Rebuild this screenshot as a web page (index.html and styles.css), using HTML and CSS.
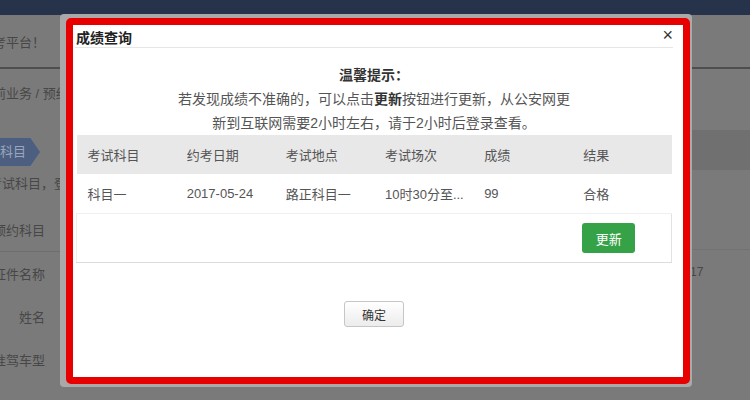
FILE: index.html
```html
<!DOCTYPE html>
<html lang="zh-CN">
<head>
    <meta charset="UTF-8">
    <title>成绩查询</title>
    <link rel="stylesheet" href="styles.css">
</head>
<body>

    <div class="topbar"></div>

    <div class="page">
        <div class="side side-left">
            <div class="row r-welcome">欢迎使用驾考平台！</div>
            <div class="row r-crumb">当前业务 / 预约</div>
            <div class="row r-tab"><span class="tab">科目</span></div>
            <div class="row r-note">请选择考试科目，登录后</div>
            <div class="row r-label r-first">预约科目</div>
            <div class="row r-label">证件名称</div>
            <div class="row r-label">姓名</div>
            <div class="row r-label">准驾车型</div>
        </div>
        <div class="side side-right">
            <div class="row r-welcome"></div>
            <div class="row r-band"></div>
            <div class="row r-gap"></div>
            <div class="row r-num">17</div>
        </div>
    </div>

    <!-- dialog over the dimmed page -->
    <div class="dialog-frame">
        <div class="dialog">
            <div class="dialog-title">
                <span>成绩查询</span>
                <span class="close">×</span>
            </div>

            <div class="dialog-body">
                <div class="tips">
                    <div class="tips-head">温馨提示：</div>
                    <div>若发现成绩不准确的，可以点击<b>更新</b>按钮进行更新，从公安网更</div>
                    <div>新到互联网需要2小时左右，请于2小时后登录查看。</div>
                </div>

                <table class="grades">
                    <thead>
                        <tr>
                            <th>考试科目</th>
                            <th>约考日期</th>
                            <th>考试地点</th>
                            <th>考试场次</th>
                            <th>成绩</th>
                            <th>结果</th>
                        </tr>
                    </thead>
                    <tbody>
                        <tr class="data-row">
                            <td>科目一</td>
                            <td>2017-05-24</td>
                            <td>路正科目一</td>
                            <td>10时30分至...</td>
                            <td>99</td>
                            <td>合格</td>
                        </tr>
                        <tr class="action-row">
                            <td colspan="5"></td>
                            <td><button class="btn-update">更新</button></td>
                        </tr>
                    </tbody>
                </table>

                <div class="footer">
                    <button class="btn-ok">确定</button>
                </div>
            </div>
        </div>
    </div>

</body>
</html>
```

FILE: styles.css
```css
body {
    margin: 0;
    width: 750px;
    height: 400px;
    overflow: hidden;
    background-color: #7a7a7a;
    font-family: "Liberation Sans", "Noto Sans CJK SC", sans-serif;
    position: relative;
}

.topbar {
    height: 15px;
    background-color: #27334a;
}

.page {
    display: flex;
    justify-content: space-between;
}

.side {
    width: 60px;
    display: flex;
    flex-direction: column;
    overflow: hidden;
    color: #474747;
    font-size: 13px;
}

.side .row {
    display: flex;
    align-items: center;
    justify-content: flex-end;
    white-space: nowrap;
}

.side-left .row {
    padding-right: 15px;
}

.r-welcome {
    height: 52px;
    border-bottom: 2px solid #4e4e4e;
}

.r-crumb {
    height: 46px;
    justify-content: flex-start !important;
    padding-right: 0 !important;
    margin-left: -20px;
}

.r-tab {
    height: 28px;
    padding-top: 23px;
    justify-content: flex-start !important;
}

.tab {
    display: inline-block;
    background-color: #4d5f80;
    color: #9aa6bd;
    height: 28px;
    line-height: 28px;
    padding: 0 14px 0 8px;
    margin-left: -8px;
    clip-path: polygon(0 0, 80% 0, 100% 50%, 80% 100%, 0 100%);
}

.r-note {
    height: 32px;
    justify-content: flex-start !important;
    margin-left: -50px;
}

.r-label {
    height: 43px;
}

.r-first {
    margin-top: 10px;
    border-bottom: 1px solid #6e6e6e;
}

.side-right .r-welcome {
    height: 52px;
}

.r-band {
    height: 40px;
    margin-top: 61px;
    background-color: #707070;
}

.r-gap {
    height: 79px;
    border-bottom: 1px solid #727272;
}

.r-num {
    height: 44px;
    justify-content: flex-start !important;
    font-size: 12px;
}

/* dialog */
.dialog-frame {
    position: absolute;
    left: 60px;
    top: 14px;
    padding: 4px 2px 3px 6px;
    background-color: #a9a9a9;
    border-radius: 4px;
}

.dialog {
    width: 610px;
    height: 352px;
    border: 7px solid #e80000;
    border-radius: 5px;
    background-color: #fff;
}

.dialog-title {
    display: flex;
    justify-content: space-between;
    align-items: flex-end;
    height: 21px;
    padding-bottom: 1px;
    margin: 0 10px 0 2px;
    padding-left: 1px;
    border-bottom: 1px solid #e6e6e6;
    font-size: 14px;
    line-height: 15px;
    font-weight: bold;
    color: #222;
}

.close {
    align-self: flex-start;
    margin-top: 2px;
    font-weight: normal;
    font-size: 18px;
    line-height: 16px;
    color: #333;
}

.dialog-body {
    padding: 0 11px 0 3px;
}

.tips {
    text-align: center;
    font-size: 14px;
    line-height: 24px;
    color: #555;
    padding-top: 15px;
}

.tips b {
    color: #333;
}

.tips-head {
    font-weight: bold;
    color: #333;
}

.grades {
    width: 100%;
    border-collapse: collapse;
    font-size: 13px;
    color: #555;
    table-layout: fixed;
}

.grades th {
    background-color: #e8e8e8;
    font-weight: normal;
    text-align: left;
    height: 39px;
    padding: 0 0 0 11px;
}

.grades td {
    text-align: left;
    padding: 0 0 0 11px;
    white-space: nowrap;
}

.data-row td {
    height: 39px;
    border-bottom: 1px solid #f0f0f0;
}

.action-row td {
    height: 48px;
    border-bottom: 1px solid #dcdcdc;
}

.action-row td:first-child {
    border-left: 1px solid #eeeeee;
}

.action-row td:last-child {
    border-right: 1px solid #e2e2e2;
    padding-left: 10px;
}

.btn-update {
    width: 53px;
    height: 30px;
    background-color: #36a247;
    color: #fff;
    border: none;
    border-radius: 3px;
    font-size: 13px;
    font-family: inherit;
}

.footer {
    text-align: center;
    margin-top: 38px;
}

.btn-ok {
    width: 60px;
    height: 26px;
    background: linear-gradient(#ffffff, #ececec);
    border: 1px solid #c6c6c6;
    border-radius: 3px;
    font-size: 12px;
    color: #333;
    font-family: inherit;
}
```
